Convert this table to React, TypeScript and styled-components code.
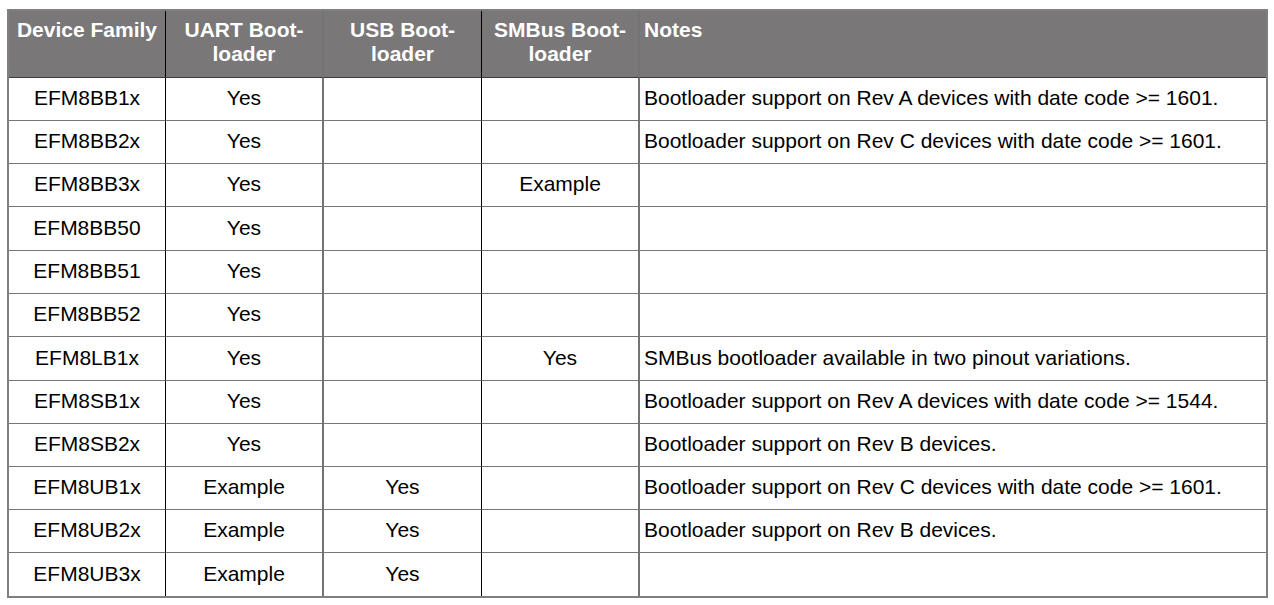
import React from 'react'
import styled, { createGlobalStyle } from 'styled-components'

const GlobalStyle = createGlobalStyle`
  html, body {
    margin: 0;
    padding: 0;
    background: #fff;
  }
  body {
    font-family: 'Liberation Sans', Arial, sans-serif;
  }
`

const Page = styled.div`
  padding: 9px 0 0 7px;
`

const Grid = styled.div`
  display: grid;
  width: 1257px;
  grid-template-columns: 157px 158px 158px 158px 626px;
  grid-template-rows: 67px 43px 43px 43px 44px 43px 43px 44px 43px 43px 43px 43px 43px;
  border: 2px solid #7f7f7f;
`

type CellProps = {
  $sep: 'thin' | 'thick' | 'none'
  $last?: boolean
  $left?: boolean
}

const sepBorder = (s: CellProps['$sep']) =>
  s === 'thin' ? '1px solid #000' : s === 'thick' ? '2px solid #747474' : 'none'

const HeadCell = styled.div<CellProps>`
  background: #797778;
  color: #fff;
  font-weight: bold;
  font-size: 21px;
  line-height: 24px;
  padding: 7px 2px 0 ${(p) => (p.$left ? '4px' : '2px')};
  text-align: ${(p) => (p.$left ? 'left' : 'center')};
  border-right: ${(p) => sepBorder(p.$sep)};
  border-bottom: 1px solid #3a3a3a;
  box-sizing: border-box;
`

const Cell = styled.div<CellProps>`
  display: flex;
  align-items: center;
  justify-content: ${(p) => (p.$left ? 'flex-start' : 'center')};
  padding-left: ${(p) => (p.$left ? '4px' : '0')};
  padding-bottom: 2px;
  font-size: 21px;
  color: #000;
  white-space: nowrap;
  border-right: ${(p) => sepBorder(p.$sep)};
  border-bottom: ${(p) => (p.$last ? 'none' : '1px solid #767676')};
  box-sizing: border-box;
`

const seps: CellProps['$sep'][] = ['thin', 'thick', 'thin', 'thick', 'none']

const rows: string[][] = [
  ['EFM8BB1x', 'Yes', '', '', 'Bootloader support on Rev A devices with date code >= 1601.'],
  ['EFM8BB2x', 'Yes', '', '', 'Bootloader support on Rev C devices with date code >= 1601.'],
  ['EFM8BB3x', 'Yes', '', 'Example', ''],
  ['EFM8BB50', 'Yes', '', '', ''],
  ['EFM8BB51', 'Yes', '', '', ''],
  ['EFM8BB52', 'Yes', '', '', ''],
  ['EFM8LB1x', 'Yes', '', 'Yes', 'SMBus bootloader available in two pinout variations.'],
  ['EFM8SB1x', 'Yes', '', '', 'Bootloader support on Rev A devices with date code >= 1544.'],
  ['EFM8SB2x', 'Yes', '', '', 'Bootloader support on Rev B devices.'],
  ['EFM8UB1x', 'Example', 'Yes', '', 'Bootloader support on Rev C devices with date code >= 1601.'],
  ['EFM8UB2x', 'Example', 'Yes', '', 'Bootloader support on Rev B devices.'],
  ['EFM8UB3x', 'Example', 'Yes', '', ''],
]

function App() {
  return (
    <Page>
      <GlobalStyle />
      <Grid>
        <HeadCell $sep="thin">Device Family</HeadCell>
        <HeadCell $sep="thick">
          UART Boot-
          <br />
          loader
        </HeadCell>
        <HeadCell $sep="thin">
          USB Boot-
          <br />
          loader
        </HeadCell>
        <HeadCell $sep="thick">
          SMBus Boot-
          <br />
          loader
        </HeadCell>
        <HeadCell $sep="none" $left>
          Notes
        </HeadCell>
        {rows.map((row, ri) =>
          row.map((val, ci) => (
            <Cell
              key={`${ri}-${ci}`}
              $sep={seps[ci]}
              $left={ci === 4}
              $last={ri === rows.length - 1}
            >
              {val}
            </Cell>
          ))
        )}
      </Grid>
    </Page>
  )
}

export default App
